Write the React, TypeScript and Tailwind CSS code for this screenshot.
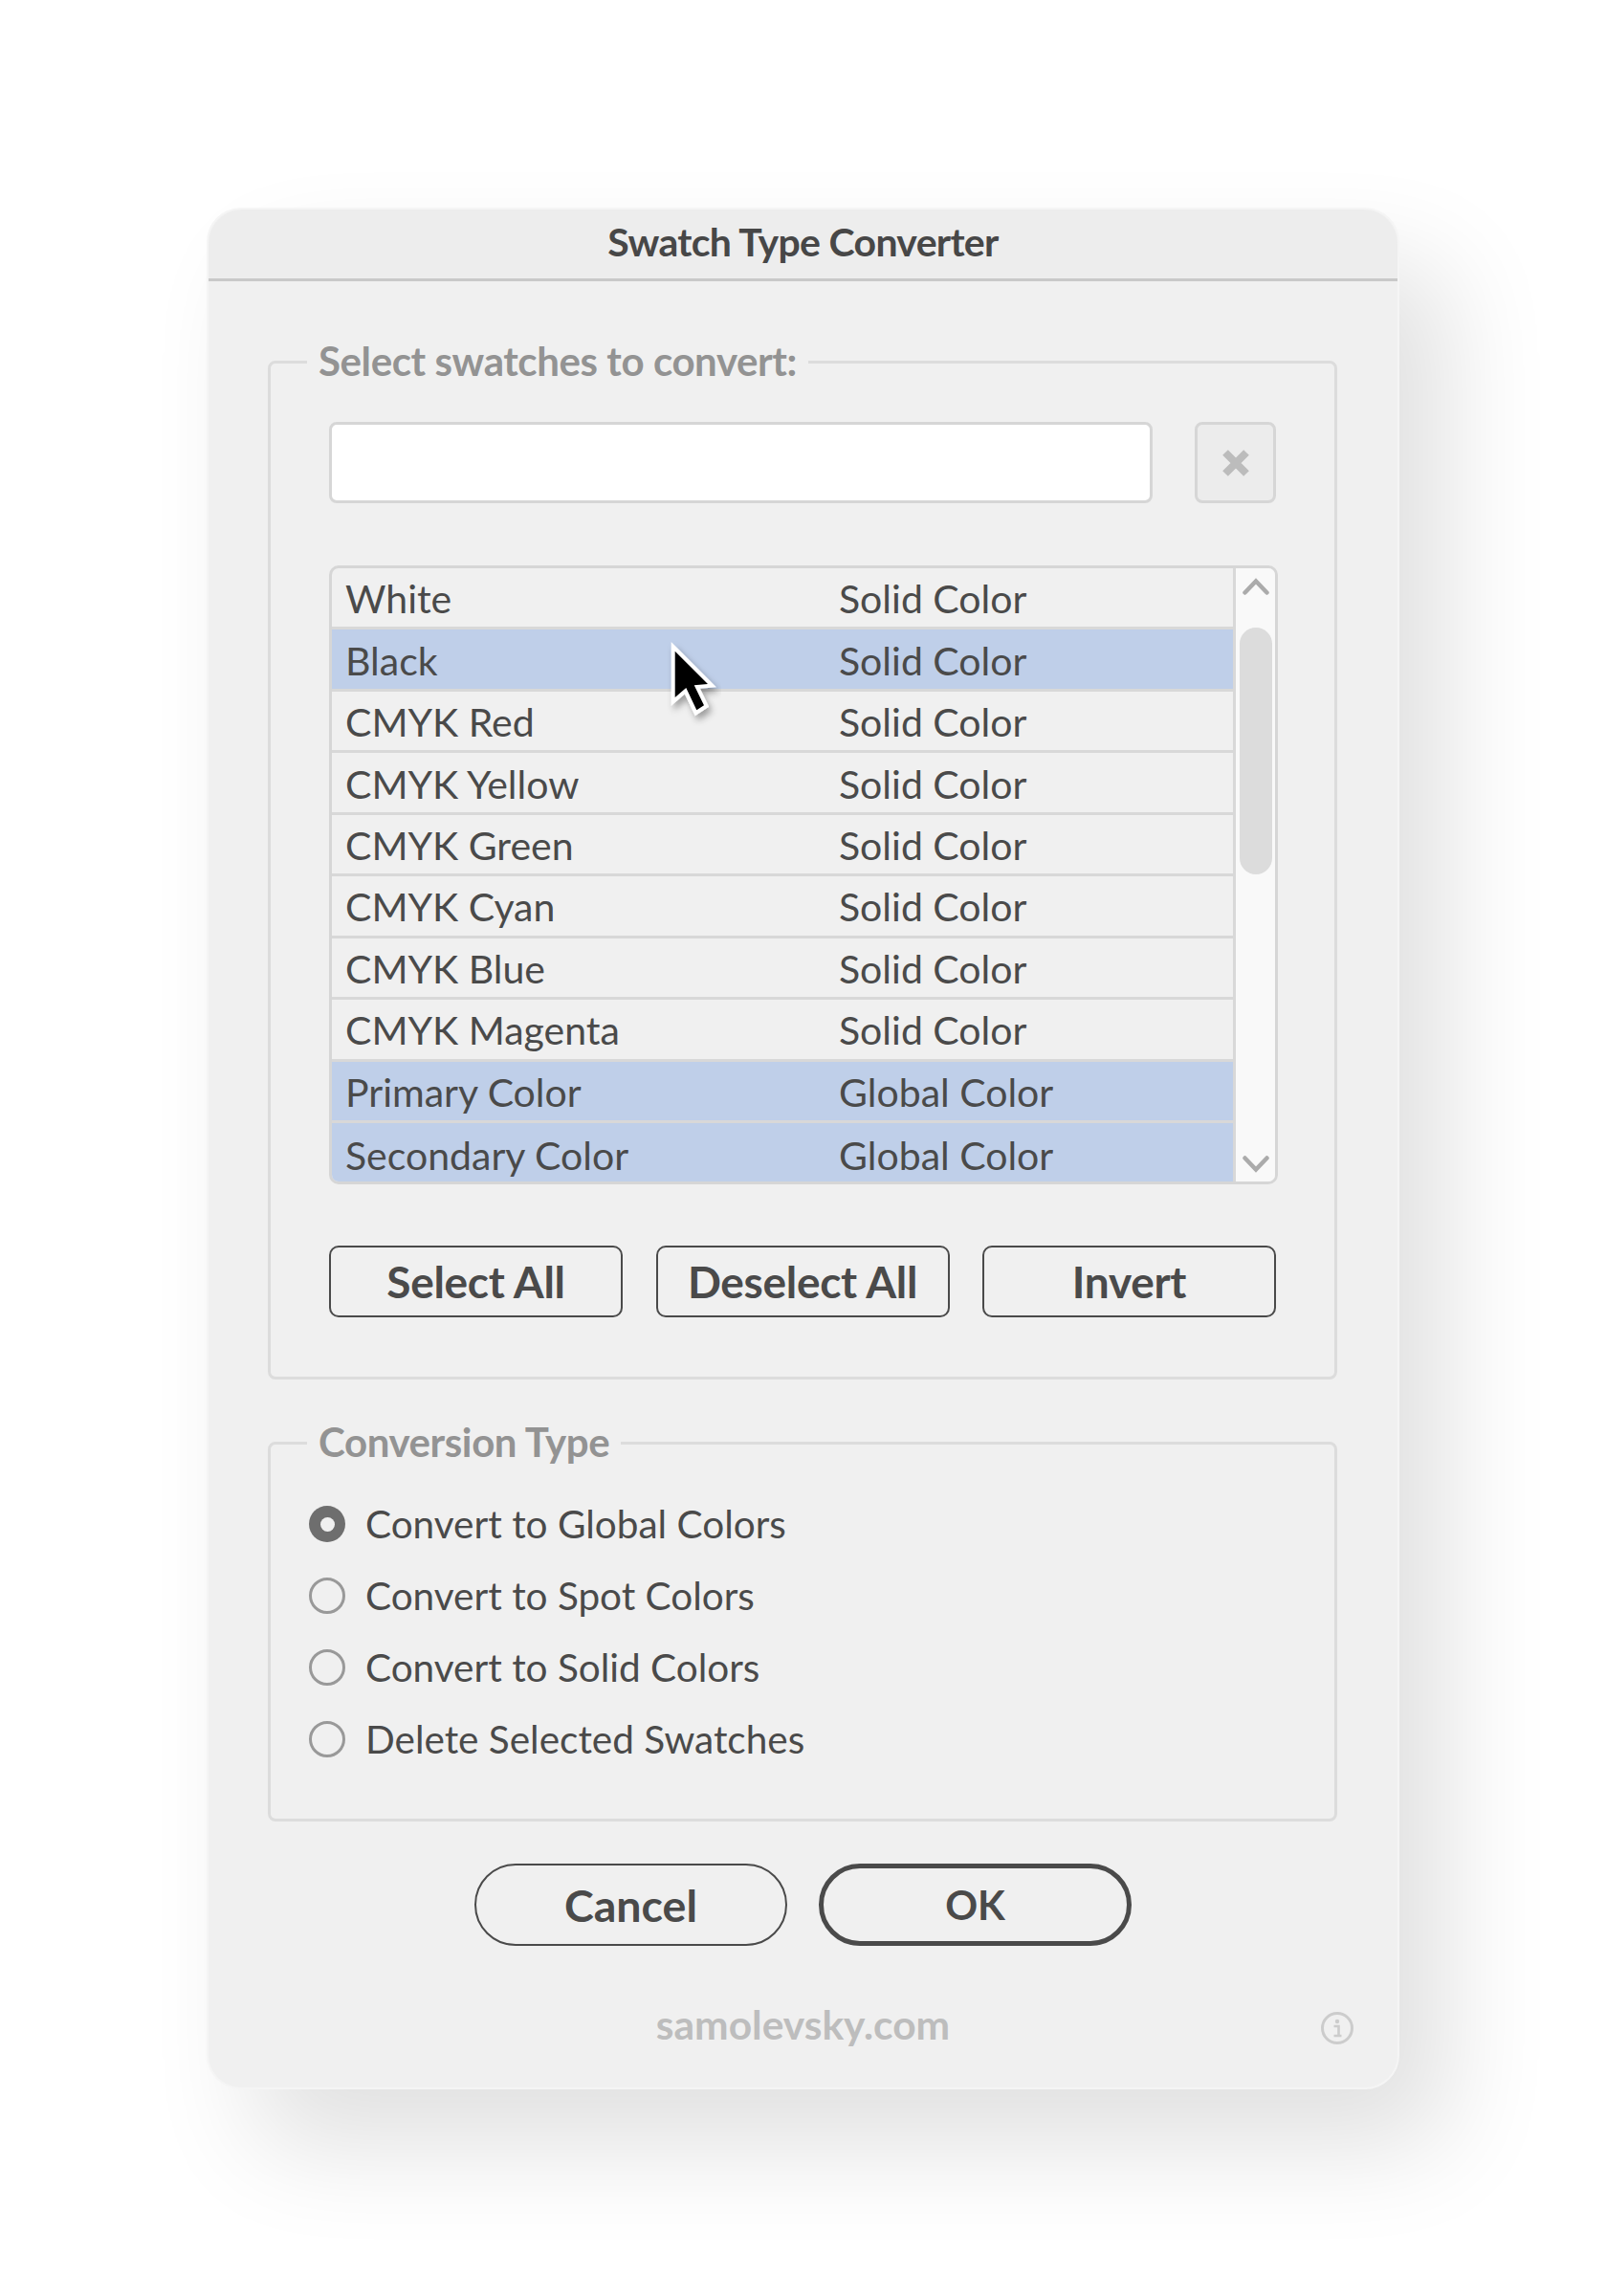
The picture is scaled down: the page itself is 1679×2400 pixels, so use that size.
const SWATCHES = [
  { name: "White", type: "Solid Color", selected: false },
  { name: "Black", type: "Solid Color", selected: true },
  { name: "CMYK Red", type: "Solid Color", selected: false },
  { name: "CMYK Yellow", type: "Solid Color", selected: false },
  { name: "CMYK Green", type: "Solid Color", selected: false },
  { name: "CMYK Cyan", type: "Solid Color", selected: false },
  { name: "CMYK Blue", type: "Solid Color", selected: false },
  { name: "CMYK Magenta", type: "Solid Color", selected: false },
  { name: "Primary Color", type: "Global Color", selected: true },
  { name: "Secondary Color", type: "Global Color", selected: true },
];

const CONVERSIONS = [
  "Convert to Global Colors",
  "Convert to Spot Colors",
  "Convert to Solid Colors",
  "Delete Selected Swatches",
];

function ActionButton({ label }: { label: string }) {
  return (
    <button className="h-[75px] w-[307px] rounded-[10px] border-2 border-[#4a4a4a] text-[46px] font-bold leading-none tracking-[-0.3px] text-[#4a4a4a]">
      {label}
    </button>
  );
}

function Cursor() {
  return (
    <svg className="absolute left-[343px] top-[65px]" width="80" height="100" viewBox="0 0 80 100">
      <defs>
        <filter id="cursor-shadow" x="-30%" y="-30%" width="170%" height="170%">
          <feDropShadow dx="3" dy="5" stdDeviation="3.5" floodColor="#000" floodOpacity="0.35" />
        </filter>
      </defs>
      <path
        d="M15.7 21.7 L50 56 L35.7 57.3 L46 78.3 L38.3 83.3 L27.3 60 L15.7 70 Z"
        fill="#000"
        stroke="#fff"
        strokeWidth="8"
        strokeLinejoin="miter"
        paintOrder="stroke"
        filter="url(#cursor-shadow)"
      />
    </svg>
  );
}

export default function App() {
  return (
    <div className="h-[2400px] w-full bg-white pt-[217px] font-['Lato','Liberation_Sans',sans-serif]">
      <div className="mx-auto h-[1967px] w-[1247px] rounded-[36px] border-2 border-[#f5f5f5] bg-[#f0f0f0] shadow-[50px_60px_110px_rgba(0,0,0,0.12)]">
        <div className="flex h-[75px] items-center justify-center rounded-t-[36px] border-b-[3px] border-[#c9c9c9] bg-[#ededed] pb-[5px] text-[41px] font-bold tracking-[-0.7px] text-[#474747]">
          Swatch Type Converter
        </div>

        <fieldset className="ml-[62px] mr-[63px] mt-[61px] h-[1087px] rounded-[8px] border-[3px] border-[#dcdcdc] px-[61px]">
          <legend className="-ml-[23px] px-[12px] pb-[2px] text-[42px] font-bold leading-[44px] tracking-[-0.4px] text-[#939393]">
            Select swatches to convert:
          </legend>

          <div className="mt-[40px] flex justify-between">
            <div className="h-[85px] w-[861px] rounded-[8px] border-[3px] border-[#d6d6d6] bg-white" />
            <button className="flex h-[85px] w-[85px] items-center justify-center rounded-[8px] border-[3px] border-[#d6d6d6] bg-[#ececec]">
              <svg width="30" height="30" viewBox="0 0 30 30">
                <path d="M4 4 L26 26 M26 4 L4 26" stroke="#bcbcbc" strokeWidth="8" />
              </svg>
            </button>
          </div>

          <div className="relative -mr-[2px] mt-[65px] flex h-[647px] overflow-hidden rounded-[10px] border-[3px] border-[#d6d6d6] bg-[#f0f0f0]">
            <div className="flex-1">
              {SWATCHES.map((s, i) => (
                <div
                  key={s.name}
                  className={`flex h-[64.45px] items-center border-[#d8d8d8] pl-[14px] pt-[2px] text-[41px] leading-none text-[#4a4a4a] ${
                    i < SWATCHES.length - 1 ? "border-b-[3px]" : ""
                  } ${s.selected ? "bg-[#bfcfe9]" : ""}`}
                >
                  <span className="w-[516px]">{s.name}</span>
                  <span>{s.type}</span>
                </div>
              ))}
            </div>
            <div className="flex w-[44px] flex-col items-center border-l-[3px] border-[#d8d8d8] bg-[#f9f9f9]">
              <svg className="mt-[10px]" width="28" height="18" viewBox="0 0 28 18">
                <path d="M2.5 15.5 L14 3.5 L25.5 15.5" fill="none" stroke="#ababab" strokeWidth="4.5" strokeLinecap="round" />
              </svg>
              <div className="mt-[34px] h-[258px] w-[34px] rounded-full bg-[#dcdcdc]" />
              <svg className="mt-[294px]" width="28" height="18" viewBox="0 0 28 18">
                <path d="M2.5 2.5 L14 14.5 L25.5 2.5" fill="none" stroke="#ababab" strokeWidth="4.5" strokeLinecap="round" />
              </svg>
            </div>
            <Cursor />
          </div>

          <div className="mt-[64px] flex justify-between">
            <ActionButton label="Select All" />
            <ActionButton label="Deselect All" />
            <ActionButton label="Invert" />
          </div>
        </fieldset>

        <fieldset className="ml-[62px] mr-[63px] mt-[43px] h-[419px] rounded-[8px] border-[3px] border-[#dcdcdc] pl-[40px]">
          <legend className="-ml-[2px] px-[12px] pb-[2px] text-[42px] font-bold leading-[44px] tracking-[-0.4px] text-[#939393]">
            Conversion Type
          </legend>
          <div className="mt-[43px] flex flex-col gap-[37px]">
            {CONVERSIONS.map((label, i) => (
              <label key={label} className="flex h-[38px] items-center gap-[21px] text-[40.5px] leading-none text-[#4a4a4a]">
                {i === 0 ? (
                  <span className="flex h-[38px] w-[38px] items-center justify-center rounded-full bg-[#6e6e6e]">
                    <span className="h-[15px] w-[15px] rounded-full bg-[#f0f0f0]" />
                  </span>
                ) : (
                  <span className="h-[38px] w-[38px] rounded-full border-[3px] border-[#999999]" />
                )}
                {label}
              </label>
            ))}
          </div>
        </fieldset>

        <div className="mt-[44px] flex justify-center gap-[33px]">
          <button className="h-[86px] w-[327px] rounded-[43px] border-2 border-[#4a4a4a] text-[46.5px] font-bold leading-none text-[#4a4a4a]">
            Cancel
          </button>
          <button className="h-[86px] w-[327px] rounded-[43px] border-[5px] border-[#4a4a4a] text-[42px] font-bold leading-none text-[#4a4a4a]">
            OK
          </button>
        </div>

        <div className="relative mt-[52px] text-center text-[42.5px] font-bold leading-[60px] text-[#bdbdbd]">
          samolevsky.com
          <svg className="absolute right-[45px] top-[16px]" width="36" height="36" viewBox="0 0 36 36">
            <circle cx="18" cy="18" r="15.5" fill="none" stroke="#cccccc" strokeWidth="3" />
            <circle cx="18" cy="11" r="2.2" fill="#cccccc" />
            <path d="M14.5 16 H19.5 V25 M14.5 26 H22.5" fill="none" stroke="#cccccc" strokeWidth="2.6" />
          </svg>
        </div>
      </div>
    </div>
  );
}
